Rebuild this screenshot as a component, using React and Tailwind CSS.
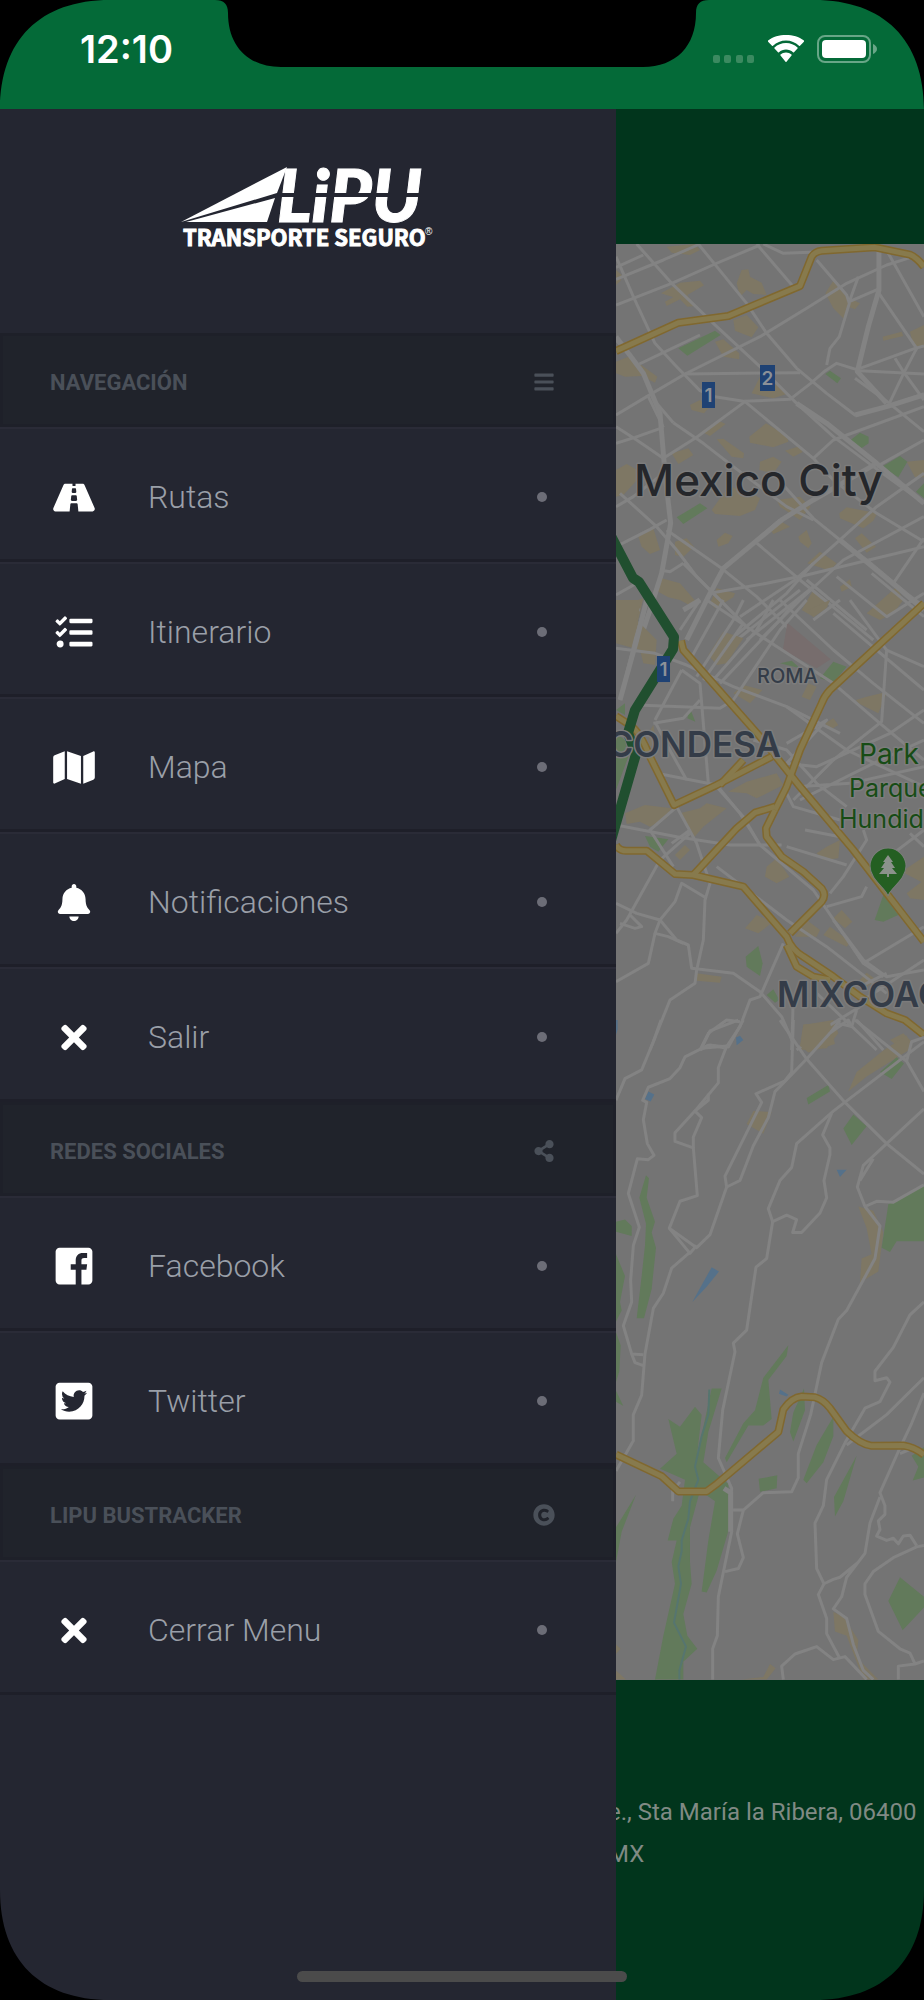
import {
  FaBars,
  FaBell,
  FaCopyright,
  FaMap,
  FaRoad,
  FaShareAlt,
  FaTasks,
  FaTimes,
  FaTwitterSquare,
} from 'react-icons/fa';

// Older square mark, with the "f" set to the right and cut by the lower edge.
function FacebookSquare({ className }) {
  return (
    <svg viewBox="0 0 448 512" fill="currentColor" className={className} aria-hidden="true">
      <path d="M448 80v352c0 26.500-21.500 48-48 48h-85.300V302.800h60.600l8.700-67.600h-69.300V192c0-19.600 5.400-32.900 33.500-32.900H384V98.700c-6.200-.8-27.400-2.700-52.200-2.700-51.600 0-87 31.500-87 89.400v49.900H184v67.600h60.900V480H48c-26.500 0-48-21.500-48-48V80c0-26.500 21.500-48 48-48h352c26.500 0 48 21.500 48 48z" />
    </svg>
  );
}

const SECTIONS = [
  {
    title: 'NAVEGACIÓN',
    Icon: FaBars,
    items: [
      { label: 'Rutas', Icon: FaRoad },
      { label: 'Itinerario', Icon: FaTasks },
      { label: 'Mapa', Icon: FaMap },
      { label: 'Notificaciones', Icon: FaBell },
      { label: 'Salir', Icon: FaTimes },
    ],
  },
  {
    title: 'REDES SOCIALES',
    Icon: FaShareAlt,
    items: [
      { label: 'Facebook', Icon: FacebookSquare, brand: true },
      { label: 'Twitter', Icon: FaTwitterSquare, brand: true },
    ],
  },
  {
    title: 'LIPU BUSTRACKER',
    Icon: FaCopyright,
    items: [{ label: 'Cerrar Menu', Icon: FaTimes }],
  },
];

/* ── Status bar ─────────────────────────────────────────────────────────── */

function StatusBar() {
  return (
    <header className="relative flex h-[109px] items-start justify-between bg-[#046a38] pl-20 pr-[45px] pt-[26px]">
      <svg viewBox="0 0 494 67" className="absolute left-1/2 top-0 h-[67px] w-[494px] -translate-x-1/2" aria-hidden="true">
        <path d="M0 0C9 0 13 4 13 13C13 46 33 67 66 67H428C461 67 481 46 481 13C481 4 485 0 494 0Z" fill="#000" />
      </svg>
      <time className="font-[Inter] text-[38px] font-semibold leading-[46px] text-white">12:10</time>
      <div className="flex h-[46px] items-center gap-3">
        <svg viewBox="0 0 42 28" className="h-7 w-[42px]" aria-hidden="true">
          {[0, 11, 23, 34].map((x) => (
            <rect key={x} x={x} y="20" width="7" height="8" rx="2" fill="#3b8a60" />
          ))}
        </svg>
        <svg viewBox="0 0 38 28" className="h-7 w-[38px]" fill="#fff" aria-hidden="true">
          <path d="M19 5.500c5 0 9.500 2 13 5.200.3.300.7.300 1 0l3.900-4c.3-.3.300-.800 0-1.100C32 1.600 25.700 0 19 0S6 1.600 1.100 5.600c-.3.300-.3.800 0 1.100l3.900 4c.3.300.7.300 1 0 3.500-3.200 8-5.200 13-5.200z" />
          <path d="M19 14.500c2.700 0 5.100 1 7 2.700.3.300.7.300 1 0l3.500-3.700c.3-.3.300-.8 0-1.100C27.400 9.600 23.400 8 19 8s-8.400 1.600-11.500 4.400c-.3.300-.3.800 0 1.100l3.500 3.700c.3.300.7.300 1 0 1.900-1.700 4.300-2.700 7-2.700z" />
          <path d="M24.500 20.500c.3-.3.300-.8 0-1.100-1.500-1.300-3.400-2-5.500-2s-4 .7-5.500 2c-.3.300-.3.800 0 1.100l5 6.300c.3.300.7.300 1 0z" />
        </svg>
        <svg viewBox="0 0 62 28" className="h-7 w-[62px]" aria-hidden="true">
          <rect x="1" y="1" width="52" height="26" rx="7" fill="none" stroke="#68a687" strokeWidth="2" />
          <rect x="5" y="5" width="44" height="18" rx="4" fill="#fff" />
          <path d="M56 9c2 .8 4 2.600 4 5s-2 4.200-4 5z" fill="#68a687" />
        </svg>
      </div>
    </header>
  );
}

/* ── Drawer ─────────────────────────────────────────────────────────────── */

function Logo() {
  return (
    <svg viewBox="0 0 254 84" className="h-[84px] w-[254px]" fill="#fff" role="img" aria-label="LiPU Transporte Seguro">
      <path d="M106 1L96 27L0 56Z" />
      <path d="M94 32L86 56H5Z" />
      <text x="96" y="56" fontFamily="Lato,sans-serif" fontSize="72" fontWeight="900" fontStyle="italic" stroke="#fff" strokeWidth="1">
        LiPU
      </text>
      <path d="M97 27H244V31H96Z" fill="#242631" />
      <text x="2" y="80" fontFamily="'Noto Sans CJK SC',sans-serif" fontSize="22" fontWeight="700" stroke="#fff" strokeWidth="1">
        TRANSPORTE SEGURO
      </text>
      <text x="244" y="69" fontFamily="'Liberation Sans',sans-serif" fontSize="10">
        ®
      </text>
    </svg>
  );
}

function MenuItem({ label, Icon, brand }) {
  return (
    <li>
      <a
        href="#"
        className="flex h-[135px] items-center gap-[50px] border-b-[3px] border-t-2 border-b-[#1e1f29] border-t-[#2a2b37] pl-[50px] pr-[62px] pt-1.5"
      >
        <span className="flex w-12 justify-center text-white">
          <Icon className={brand ? 'h-[42px] w-[42px]' : 'h-[37px] w-[42px]'} />
        </span>
        <span className="flex-1 text-[32px] font-light leading-10 text-[#9a9fa8]">{label}</span>
        <span className="flex w-6 justify-center">
          <span className="size-[10px] rounded-full bg-[#6c6d77]" />
        </span>
      </a>
    </li>
  );
}

function Drawer() {
  return (
    <aside className="w-2/3 shrink-0 bg-[#242631]">
      <div className="flex h-56 justify-center pt-[57px]">
        <Logo />
      </div>
      <nav>
        {SECTIONS.map(({ title, Icon, items }) => (
          <section key={title}>
            <h2 className="flex h-[94px] items-center justify-between border-[3px] border-[#1e2029] bg-[#20232b] pl-[47px] pr-[58px] pt-1 text-[22px] font-bold text-[#4a5059]">
              {title}
              <Icon className="h-[22px] w-auto" />
            </h2>
            <ul>
              {items.map((item) => (
                <MenuItem key={item.label} {...item} />
              ))}
            </ul>
          </section>
        ))}
      </nav>
    </aside>
  );
}

/* ── Map ────────────────────────────────────────────────────────────────── */

// The map is drawn in three tiles, north to south, each with its own units.
const TILES = [
  {
    name: 'centro',
    transform: 'translate(-16 -4) scale(0.3333)',
    blocks: [
      'M183 160L240 128L300 122L312 136L262 165L285 198L262 200L240 178L200 198L195 185L220 172Z',
      'M410 130L425 90L445 88L450 110L485 128L500 165L460 162L440 150L420 170Z',
      'M676 160L700 122L740 170L780 190L765 208L745 200L735 240L700 205Z',
      'M48 90L65 105L62 122L48 135Z',
      'M200 20L285 12L300 30L270 45L215 38Z',
      'M400 240L440 225L475 262L455 292L405 272Z',
      'M345 305L370 298L418 340L418 358L370 350Z',
      'M848 290L905 275L910 288L850 302Z M930 275L972 255V325L940 318Z',
      'M48 365L85 350L120 372L172 410L165 428L125 408L75 410L48 400Z',
      'M455 460L480 410L505 405L560 462L520 475Z',
      'M270 495L300 480L325 505L312 520L275 510Z',
      'M305 575L355 542L377 552L330 588Z M350 598L370 596L432 640L430 655L395 650Z',
      'M448 590L498 550L562 588L565 605L520 622L450 608Z',
      'M555 632L600 618L608 636L580 650Z M480 665L520 650L545 665L520 700L478 690Z',
      'M215 640L265 625L280 645L235 672Z M48 690L80 672L130 700L70 765L48 770Z',
      'M335 810L385 740L440 750L480 775L465 810L420 828L345 822Z',
      'M530 780L600 770L632 800L600 840L540 800Z M510 868L545 845L570 860L520 882Z',
      'M718 820L740 802L832 820L820 842L790 865L720 835Z M765 895L785 880L828 920L800 938Z',
      'M350 900L375 878L398 888L385 910L355 920Z M595 890L620 870L635 910L625 925L600 905Z',
      'M115 890L160 865L180 930L150 942L125 920Z M225 905L260 895L282 920L250 950L225 945Z',
      'M622 970L660 935L710 970L690 992Z M165 1050L185 1015L240 1030L292 1090L280 1102L240 1080L205 1072Z',
      'M330 1090L350 1045L405 1060L400 1072L345 1105Z M605 1110L640 1050L680 1080L665 1110L640 1130Z',
      'M800 1120L890 1040L910 1080L880 1120L840 1140Z M85 1090L130 1075L110 1160L130 1200H48V1180Z',
      'M720 1040L750 1018L755 1040L725 1055Z M920 665L972 660V712L945 712Z',
    ],
    greens: [
      'M235 325L345 272L362 285L262 347Z',
      'M676 402L690 392L723 415L712 430Z',
      'M752 600L780 578L806 590L806 610L782 626Z',
      'M846 680L900 648L922 665L895 712Z',
      'M230 832L300 790L322 805L250 852Z',
      'M948 755L972 730V775Z',
    ],
    roads: [
      'M48 50L100 170L165 310L225 375L300 452L345 470L430 484L570 478L632 430L676 392L710 370L780 392L972 402',
      'M110 12L215 130L340 250L480 380L590 490L700 590L820 680L972 790',
      'M295 12L440 190L500 280L590 385L680 460L765 525L860 500L972 462',
      'M48 195L215 130L345 72L480 15',
      'M48 118L190 60L300 12 M48 82L130 45',
      'M118 372L185 340L300 285 M48 525L140 470L255 402L480 290L620 205L740 130L860 75L940 50',
      'M255 402L600 398',
      'M470 12L580 140 M490 12L550 40L670 35 M650 60L740 165L748 190L718 290L690 325L680 375',
      'M775 110L748 185L840 145',
      'M865 40L972 230 M837 160L950 325L912 398L868 490',
      'M780 385L945 325L972 318 M885 355L912 398L972 480 M765 415L868 490L972 575',
      'M48 610L105 592L190 562 M48 560L110 600L190 655 M48 300L110 370',
      'M220 548L310 610L400 680L560 800L640 840',
      'M190 562L145 470 M220 548L170 490 M190 655L290 592L435 485L640 655L700 720',
      'M48 800L100 770L190 700 M48 920L150 868L200 840 M60 760L170 860L230 930L290 1010L360 1080L450 1170',
      'M420 1130L585 1020L720 900L830 800L972 700',
      'M480 1200L600 1080L730 960L972 830 M830 680L972 600 M700 720L830 820L972 905',
      'M200 870L365 985L470 1070L600 1200 M330 1060L500 1030L620 1005L972 920',
      'M365 985L465 905L540 840 M465 905L600 1020L760 1150L820 1200',
      'M545 730L640 835L720 900L800 960L920 1060L972 1100 M620 1020L800 1170 M710 1010L860 1130L972 1060',
      'M250 970L210 995L180 990 M250 970L330 1050L420 1140 M880 1030L972 895 M815 1000L972 1130',
      'M48 1085L120 1110 M48 1065L110 1030 M640 655L700 600L972 500',
      'M390 1200L560 1060L640 970 M410 1200L600 1050 M440 1200L640 1040',
    ],
    wideRoads: [
      'M48 290L130 400L180 520L195 700L212 850L185 1000L150 1110L120 1200',
      'M837 30V150L805 260L772 395L860 490',
      'M260 1200L330 1060L370 985L545 840L640 780L830 670',
      'M590 490L680 550L830 670L972 790 M720 900L890 1040L972 1110',
      'M765 525L860 500L972 465',
    ],
    highways: ['M48 333L235 248L385 228L600 138L635 50Q645 34 665 32L825 22L930 44Q950 52 972 80'],
  },
  {
    name: 'condesa',
    transform: 'translate(-16 356) scale(0.3333)',
    blocks: [
      'M48 0H125L110 60L170 120L165 195L130 190L120 150L48 130Z',
      'M325 165L370 95L430 115L380 190L350 195Z M400 280L430 255L487 270L450 310Z',
      'M768 300L800 290L862 275L835 340L775 310Z M605 290L625 250L650 260L630 300Z',
      'M75 640L135 615L215 625L200 655L150 680L120 665L80 672Z',
      'M240 640L300 625L320 610L380 625L310 680L280 715Z M385 575L440 545L530 520L550 555L470 595L440 580Z',
      'M650 760L680 740L720 720L715 775L670 780Z M500 800L530 775L568 830L530 850L495 830Z',
      'M435 985L470 945L520 965L475 1000Z M585 1010L620 960L660 990L650 1010Z',
      'M700 955L725 930L757 965L735 985Z M670 1005L690 980L752 1025L740 1040Z',
      'M290 1120L365 1130L360 1148L290 1142Z M610 1275L700 1260L715 1300L680 1345L600 1350Z',
      'M920 880L972 840V900L930 895Z M905 815L972 770V850Z M870 1320L910 1300L935 1325L900 1345Z',
      'M675 370L700 355L715 375L690 390Z M625 30L690 0L680 25L640 52Z M225 765L255 735L270 750L240 780Z',
      'M770 1150L800 1118L830 1140L800 1160Z M145 400L160 375L170 430L150 440Z',
    ],
    greens: [
      'M660 235L700 185L740 200L700 248Z M540 190L575 182L600 205Z',
      'M48 400L75 420L85 470L48 570Z M48 330L75 310V345Z',
      'M262 355L270 325L286 365Z M135 708L205 718L175 755L150 740Z',
      'M437 1070L475 1038L488 1090L480 1128L440 1100Z',
      'M824 960L850 885L895 945L850 965Z M500 1185L520 1168L538 1200L525 1208Z',
    ],
    plaza: 'M550 140L562 68L692 178L650 205L548 150Z',
    roads: [
      'M140 0L105 120L60 300 M48 145L165 160L260 195L400 260L560 320L720 400',
      'M240 90L300 0 M270 180L370 0 M290 230L400 60L430 0 M310 240L430 70 M340 240L470 90L520 0 M360 250L540 60L590 0',
      'M320 0L500 120L700 250L840 370L972 480',
      'M110 315L360 325L400 300L540 90L620 0 M165 360L245 210 M245 210L300 250L325 550',
      'M160 370L250 355L300 300 M165 365L215 460L260 540 M170 520L350 555L420 640L480 735',
      'M540 0L700 150L820 250L972 370 M700 40L972 270 M640 60L720 0 M750 0L860 150L845 365L700 480L580 600',
      'M860 150L972 200 M560 320L740 450L972 560 M560 490L650 500L870 400L972 330',
      'M590 560L750 550L972 500 M600 600L820 490L972 420 M560 430L680 360L560 490 M460 420L560 450L650 550L740 620',
      'M48 675L230 710L390 735L545 735 M230 620L290 730L330 850L315 900L310 1020L290 1110L285 1150L210 1200L150 1350',
      'M225 625L150 690L220 800 M270 700L180 780L80 960L48 1000 M270 690L215 730',
      'M48 910L110 940L180 960L230 1020L265 1035L275 1105L400 1120L480 1175L545 1250L580 1330',
      'M90 945L125 980L105 985L60 970 M180 960L165 1000L205 1010L250 1030 M180 960L225 905L245 850L320 895',
      'M165 1000L145 1090L48 1145',
      'M350 560L430 650L480 735L640 870L790 1090L850 1130 M350 800L560 960L680 1040L860 1180',
      'M560 740L740 795 M550 560L580 620L720 660 M615 690L720 710 M790 690L800 720L730 830L690 880',
      'M972 690L880 760 M930 700L972 740 M800 860L785 890L680 920 M550 1030L480 1190L450 1200L420 1280L380 1340',
      'M545 1180L580 1190L575 1350 M420 1265L380 1260L325 1300L300 1350 M380 1345L330 1335L300 1350',
      'M700 960L790 1080L860 1130L972 1110 M790 1090L972 980 M780 1220L650 1300L590 1350 M780 1160L860 1120 M770 1260L850 1350',
      'M770 1230L755 1280L715 1270 M640 1170L830 1350 M760 1220L972 1080',
    ],
    wideRoads: ['M60 300L110 120L140 0 M250 30L300 0'],
    highways: [
      'M243 122L250 150L480 410L600 560L760 750L860 880L972 1025',
      'M48 348L90 375Q120 395 150 470L222 615L350 555L515 470',
      'M360 555L430 480',
      'M972 10L690 270Q672 290 665 310L600 450L560 560L525 630',
      'M525 620L465 638L410 685L280 825',
      'M525 630L498 685L500 710L545 770L610 815L665 865Q680 885 665 905L570 1000',
      'M48 735Q60 755 85 752L140 752L225 822L280 825L430 860L560 1010Q575 1050 610 1070L700 1130L780 1190L860 1240L915 1260L972 1305',
      'M560 1035L590 1100L640 1130L690 1140',
    ],
  },
  {
    name: 'sur',
    transform: 'translate(-16 776) scale(0.3333 0.4336)',
    blocks: [
      'M440 240L460 210L515 212L490 262Z M610 10L690 5L705 55L625 75L600 60Z',
      'M770 120L850 70L920 35L935 65L800 130L745 165Z',
      'M775 430L820 440L850 490L835 580L780 605L785 550L815 540L800 480Z',
      'M700 1365L730 1375L775 1430L770 1470L835 1521H790L740 1420L705 1410Z',
      'M425 1521L490 1515L510 1485L527 1495L500 1521Z M48 1440L62 1450L48 1462Z M48 1500L78 1521H48Z',
    ],
    greens: [
      'M118 410L138 358L147 365L140 410L165 465L155 490L168 525L155 620L132 688H110L125 590L135 520L138 470Z',
      'M48 465L75 460L95 475V498L48 488Z M48 540L75 590L60 650L65 670L48 695Z M48 720L62 750L58 810L48 835V855L70 890L48 880Z',
      'M620 180L685 150L690 165L625 195Z M840 120L890 86L912 100L875 136Z M730 250L760 218L800 245L755 288Z',
      'M865 425L972 378V510H890L870 535L845 525Z',
      'M205 920L240 938L285 892L305 910L290 1010L335 850H365L325 950L310 1020L385 1070L388 1170L350 1270L320 1320L305 1318L325 1200L345 1110L300 1085L270 1170V1250L275 1300L250 1370L262 1420L292 1450L250 1480V1521H165L190 1420L225 1300L215 1250L230 1200H203L220 1150L245 1120L255 1060L180 1035L230 1000Z',
      'M375 1010L430 930L465 900L490 825L565 750L560 775L505 830L515 920L490 935H445L380 1020Z',
      'M476 1058L532 1050L530 1080L480 1088Z M580 905L612 850L615 900L580 972L570 950Z',
      'M610 1060L650 980L700 915V960L670 1020L620 1068Z M702 1100L770 1005L730 1110L705 1145Z',
      'M865 1340L900 1285L972 1330V1355L908 1407Z M972 985L935 1005L955 1030L938 1062L972 1055Z',
      'M48 1250V1170L108 1095L65 1180Z',
    ],
    roads: [
      'M183 0L160 50L125 115L75 135L48 185',
      'M430 0L385 62L325 58L255 85L240 110L210 135L145 155L128 185L140 190L130 230L142 285L162 312L145 322L112 320L85 400L118 478L100 520L92 600L95 650L70 705L95 770L130 772',
      'M415 0L330 25L305 65L380 60L355 110V145L290 205L225 260L225 280L280 295L292 405L240 418L208 480L290 525L330 495L380 385L375 360L485 190L468 170L555 140L575 120L580 0',
      'M325 170V185L285 210L305 225L280 270V295 M208 480L270 538L290 520',
      'M270 535L215 572L190 630L160 665L135 770L125 865L100 910L100 970L48 1040 M95 770L105 790L130 797',
      'M620 90L525 165L505 225L460 290L420 370L380 385',
      'M540 0L620 90L735 190L860 285L972 355 M620 90L690 30L720 0 M690 30L745 0L755 15',
      'M972 50L700 210L590 285L575 340L540 370L505 435L518 465L500 550L468 570L440 715L400 745L405 765L368 900L355 1010L395 1080V1180L355 1330L352 1420L338 1450V1521',
      'M518 465L560 450L590 460L578 490H605L660 445L680 410L672 370L690 310L690 295L668 265L695 215',
      'M765 0L920 95L972 165 M920 95L935 50L972 40 M860 285L972 205 M860 285L790 335L772 385L795 430L830 418L880 420L972 380 M820 320L780 370',
      'M795 430L840 475L825 550L740 670L715 690L665 790L632 910L595 1000L595 1055L575 1088L490 1090L430 1130H395 M430 1130L412 1185L430 1240L415 1265L375 1272',
      'M972 650L930 680L880 755L825 810V832L860 825L870 835L840 880L795 895L735 975L680 1060L670 1120L645 1160L650 1265L672 1300L655 1325L680 1380V1415L718 1470',
      'M972 825L860 910L740 980 M972 860L935 930L895 995L840 1090L855 1120V1140L835 1155L840 1175L830 1190L860 1200L880 1195L895 1208L910 1190L930 1188L950 1212',
      'M900 1000L930 990 M840 1100L810 1160L795 1230L740 1285L725 1330L700 1358L740 1380L760 1440L790 1500L820 1521 M775 1250L720 1285L700 1290L672 1300',
      'M972 1212L950 1215L880 1240L820 1272L795 1300V1325L835 1410L900 1450L930 1460L945 1485L895 1490L895 1521 M945 1485L972 1478',
      'M550 1521L545 1490L585 1462L650 1445L700 1475L735 1468L800 1521 M218 1110V1085L240 1065',
    ],
    wideRoads: ['M372 1080L392 1090L392 1180'],
    water: [
      'M277 650L335 570L357 580L320 615Z M135 182L145 165L163 172L152 188Z',
      'M408 40L420 36L430 46L410 58Z M710 345H740L720 362Z M540 852L565 864L560 868L537 862Z M48 0H53V22L48 34Z',
    ],
    rivers: ['M328 852L325 910L305 960L285 1030L295 1060L270 1110L265 1150L245 1200V1225L235 1260L243 1300L222 1390L258 1445L238 1500V1521'],
    highways: [
      'M48 1002L185 1052L235 1087H320L350 1070L535 950L550 898Q575 870 605 868L645 870Q670 875 690 895L740 948Q780 978 815 982L910 981Q945 985 972 1003',
    ],
  },
];

const BADGES = [
  { x: 86, y: 138, w: 13, text: '1' },
  { x: 144, y: 121, w: 15, text: '2' },
  { x: 41, y: 412, w: 13, text: '1' },
];

function MapTile({ tile }) {
  return (
    <g transform={tile.transform}>
      {tile.blocks.map((d) => (
        <path key={d} d={d} fill="#7e7764" />
      ))}
      {tile.greens.map((d) => (
        <path key={d} d={d} fill="#627a5b" />
      ))}
      {tile.water?.map((d) => (
        <path key={d} d={d} fill="#55718a" />
      ))}
      {tile.plaza && <path d={tile.plaza} fill="#776d6d" />}
      <g fill="none" strokeLinejoin="round">
        {tile.rivers?.map((d) => (
          <path key={d} d={d} stroke="#56756f" strokeWidth="2" vectorEffect="non-scaling-stroke" />
        ))}
        {tile.roads.map((d) => (
          <path key={d} d={d} stroke="#838383" strokeWidth="3" vectorEffect="non-scaling-stroke" />
        ))}
        {tile.wideRoads.map((d) => (
          <path key={d} d={d} stroke="#838383" strokeWidth="5" vectorEffect="non-scaling-stroke" />
        ))}
        {tile.highways.map((d) => (
          <path key={d} d={d} stroke="#80682f" strokeWidth="8" vectorEffect="non-scaling-stroke" />
        ))}
        {tile.highways.map((d) => (
          <path key={d} d={d} stroke="#877a4d" strokeWidth="5" vectorEffect="non-scaling-stroke" />
        ))}
      </g>
    </g>
  );
}

function CityMap() {
  return (
    <div className="relative flex-1 overflow-hidden bg-[#747474]">
      <svg
        viewBox="0 0 308 1436"
        preserveAspectRatio="xMinYMin slice"
        className="absolute inset-0 h-full w-full font-[Inter]"
        role="img"
        aria-label="Mexico City"
      >
        {TILES.map((tile) => (
          <MapTile key={tile.name} tile={tile} />
        ))}

        {/* bus route */}
        <path d="M-6 290L17 334L23 338L58 393L57 405L19 466L12 489L20 510L-6 600" fill="none" stroke="#204f2f" strokeWidth="10" strokeLinejoin="round" />

        {BADGES.map(({ x, y, w, text }) => (
          <g key={`${x}-${y}`}>
            <rect x={x} y={y} width={w} height="26" fill="#1f4274" />
            <text x={x + w / 2} y={y + 20} textAnchor="middle" fontSize="19" fontWeight="600" fill="#8c9198">
              {text}
            </text>
          </g>
        ))}

        <g stroke="#7c7c7c" strokeWidth="3" strokeLinejoin="round" paintOrder="stroke">
          <text x="18" y="252" fontSize="44" fontWeight="500" fill="#25272b">Mexico City</text>
          <g fill="#343c48">
            <text x="141" y="439" fontSize="20" fontWeight="500">ROMA</text>
            <text x="165" y="513" fontSize="35" fontWeight="600" textAnchor="end">CONDESA</text>
            <text x="161" y="763" fontSize="35" fontWeight="600">MIXCOAC</text>
          </g>
          <g fill="#174c15">
            <text x="243" y="520" fontSize="28">Park</text>
            <text x="233" y="553" fontSize="25">Parque</text>
            <text x="223" y="584" fontSize="25">Hundido</text>
          </g>
        </g>

        {/* park pin */}
        <path d="M272 652C270 644 254 636 254 622A18 18 0 0 1 290 622C290 636 274 644 272 652Z" fill="#245f22" stroke="#7c7c7c" />
        <path d="M272 611L277 618H275L279 624H276L281 630H273V633H271V630H263L268 624H265L269 618H267Z" fill="#8b928b" />
      </svg>
    </div>
  );
}

function RoutePage() {
  return (
    <main className="flex min-w-0 flex-1 flex-col overflow-hidden bg-[#01351c]">
      <div className="h-[135px]" />
      <CityMap />
      <address className="-ml-2 h-80 whitespace-nowrap pt-[111px] text-2xl not-italic leading-[42px] text-[#808a84]">
        e., Sta María la Ribera, 06400
        <br />
        MX
      </address>
    </main>
  );
}

function Corner({ className }) {
  return (
    <svg viewBox="0 0 110 110" className={`absolute size-[110px] ${className}`} aria-hidden="true">
      <path d="M0 0H110C40 0 0 40 0 110Z" fill="#000" />
    </svg>
  );
}

export default function App() {
  return (
    <div className="relative flex min-h-screen flex-col overflow-hidden font-[Roboto,sans-serif]">
      <StatusBar />
      <div className="flex flex-1">
        <Drawer />
        <RoutePage />
      </div>
      <div className="absolute bottom-[18px] left-1/2 h-[11px] w-[330px] -translate-x-1/2 rounded-full bg-[#4b4b4b]" />
      <Corner className="left-0 top-0" />
      <Corner className="right-0 top-0 -scale-x-100" />
      <Corner className="bottom-0 left-0 -scale-y-100" />
      <Corner className="bottom-0 right-0 rotate-180" />
    </div>
  );
}
